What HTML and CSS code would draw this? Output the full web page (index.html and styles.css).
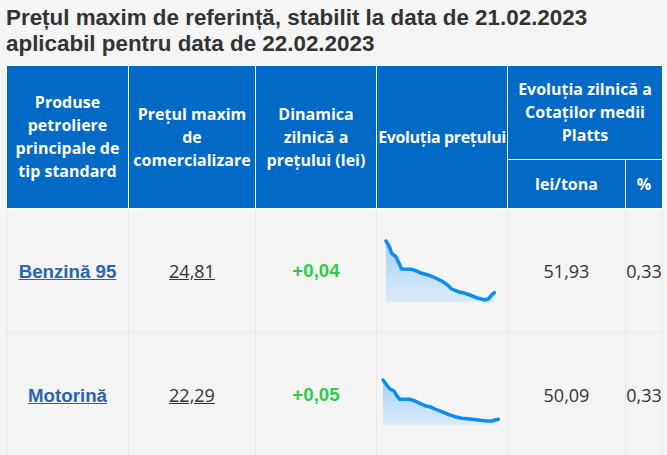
FILE: index.html
```html
<!DOCTYPE html>
<html lang="ro">
<head>
<meta charset="utf-8">
<title>Prețul maxim de referință</title>
<link rel="stylesheet" href="styles.css">
</head>
<body>
<h2 class="title">Prețul maxim de referință, stabilit la data de 21.02.2023 aplicabil pentru data de 22.02.2023</h2>
<table class="prices">
  <colgroup>
    <col class="c1"><col class="c2"><col class="c3"><col class="c4"><col class="c5"><col class="c6">
  </colgroup>
  <thead>
    <tr class="h1">
      <th rowspan="2">Produse petroliere principale de tip standard</th>
      <th rowspan="2">Prețul maxim de comercializare</th>
      <th rowspan="2">Dinamica zilnică a prețului (lei)</th>
      <th rowspan="2" class="nowrap">Evoluția prețului</th>
      <th colspan="2">Evoluția zilnică a Cotaților medii Platts</th>
    </tr>
    <tr class="h2">
      <th>lei/tona</th>
      <th>%</th>
    </tr>
  </thead>
  <tbody>
    <tr>
      <td><a class="product" href="#">Benzină 95</a></td>
      <td><a class="price" href="#">24,81</a></td>
      <td class="up">+0,04</td>
      <td class="spark">
        <svg width="120" height="64" viewBox="0 0 120 64">
          <defs>
            <linearGradient id="g1" x1="0" y1="0" x2="0" y2="1">
              <stop offset="0" stop-color="#a3d0f7"/>
              <stop offset="1" stop-color="#dcebf8"/>
            </linearGradient>
          </defs>
          <polygon fill="url(#g1)" points="4,2 7.3,7.7 9.7,14.3 14,17.7 16.3,22.7 19.7,30 29.7,30.3 34.7,32 39.7,34.3 46.3,36 53,38.7 59.7,42 64.7,45.3 69.7,50 76.3,52.7 83,54.3 88,56 96.3,59.3 103,61 106.3,60 109.7,56 112.3,53.7 112.3,63.3 4,63.3"/>
          <polyline fill="none" stroke="#0a8ef5" stroke-width="3.5" stroke-linejoin="round" stroke-linecap="round" points="4,2 7.3,7.7 9.7,14.3 14,17.7 16.3,22.7 19.7,30 29.7,30.3 34.7,32 39.7,34.3 46.3,36 53,38.7 59.7,42 64.7,45.3 69.7,50 76.3,52.7 83,54.3 88,56 96.3,59.3 103,61 106.3,60 109.7,56 112.3,53.7"/>
        </svg>
      </td>
      <td class="num">51,93</td>
      <td class="num">0,33</td>
    </tr>
    <tr>
      <td><a class="product" href="#">Motorină</a></td>
      <td><a class="price" href="#">22,29</a></td>
      <td class="up">+0,05</td>
      <td class="spark">
        <svg width="120" height="64" viewBox="0 0 120 64">
          <defs>
            <linearGradient id="g2" x1="0" y1="0" x2="0" y2="1">
              <stop offset="0" stop-color="#a3d0f7"/>
              <stop offset="1" stop-color="#dcebf8"/>
            </linearGradient>
          </defs>
          <polygon fill="url(#g2)" points="1,17 4.7,22 8,26 12,28 14.7,32.7 18,36.3 28,36.3 33,38 38,40.3 43,42.7 48,43.7 53,46 59.7,48.7 66.3,51.3 73,53.7 79.7,55.3 88,56 96.3,57 104.7,58 109.7,58 113,57 116.3,56.3 116.3,62 1,62"/>
          <polyline fill="none" stroke="#0a8ef5" stroke-width="3.5" stroke-linejoin="round" stroke-linecap="round" points="1,17 4.7,22 8,26 12,28 14.7,32.7 18,36.3 28,36.3 33,38 38,40.3 43,42.7 48,43.7 53,46 59.7,48.7 66.3,51.3 73,53.7 79.7,55.3 88,56 96.3,57 104.7,58 109.7,58 113,57 116.3,56.3"/>
        </svg>
      </td>
      <td class="num">50,09</td>
      <td class="num">0,33</td>
    </tr>
  </tbody>
</table>
</body>
</html>
```

FILE: styles.css
```css
html, body {
  margin: 0;
  background: #f5f5f5;
}
body {
  padding: 0 5px 0 6px;
  overflow: hidden;
}
.title {
  font-family: "Liberation Sans", Arial, sans-serif;
  font-weight: bold;
  font-size: 22.4px;
  line-height: 26px;
  color: #333333;
  margin: 5px 0 8px;
}
.prices {
  border-collapse: collapse;
  table-layout: fixed;
  width: 656px;
}
.c1 { width: 122px; }
.c2 { width: 127px; }
.c3 { width: 121px; }
.c4 { width: 131px; }
.c5 { width: 118px; }
.c6 { width: 37px; }
.prices th {
  background: #0169c6;
  color: #ffffff;
  font-family: "Open Sans", sans-serif;
  font-weight: bold;
  font-size: 16px;
  line-height: 23px;
  border: 1px solid #ffffff;
  padding: 0 1px;
  text-align: center;
  vertical-align: middle;
}
.prices th.nowrap {
  white-space: nowrap;
  letter-spacing: -0.35px;
  padding: 0;
}
.prices tr.h1 { height: 94px; }
.prices tr.h2 { height: 49px; }
.prices td {
  background: #f4f4f4;
  border: 1px solid #e6e8ed;
  height: 123px;
  padding: 0;
  text-align: center;
  vertical-align: middle;
  font-family: "Open Sans", sans-serif;
  font-size: 18px;
  color: #333333;
}
.product {
  font-family: "Liberation Sans", Arial, sans-serif;
  font-weight: bold;
  font-size: 18.7px;
  color: #2c63b0;
  text-decoration: underline;
}
.price {
  color: #333333;
  text-decoration: underline;
}
.prices td.up {
  font-family: "Liberation Sans", Arial, sans-serif;
  font-weight: bold;
  font-size: 18.7px;
  color: #2ecc48;
}
.prices td.spark {
  text-align: left;
  padding-left: 5px;
  line-height: 0;
}
.spark svg {
  display: block;
  overflow: visible;
}
.prices td.num {
  white-space: nowrap;
}
```
